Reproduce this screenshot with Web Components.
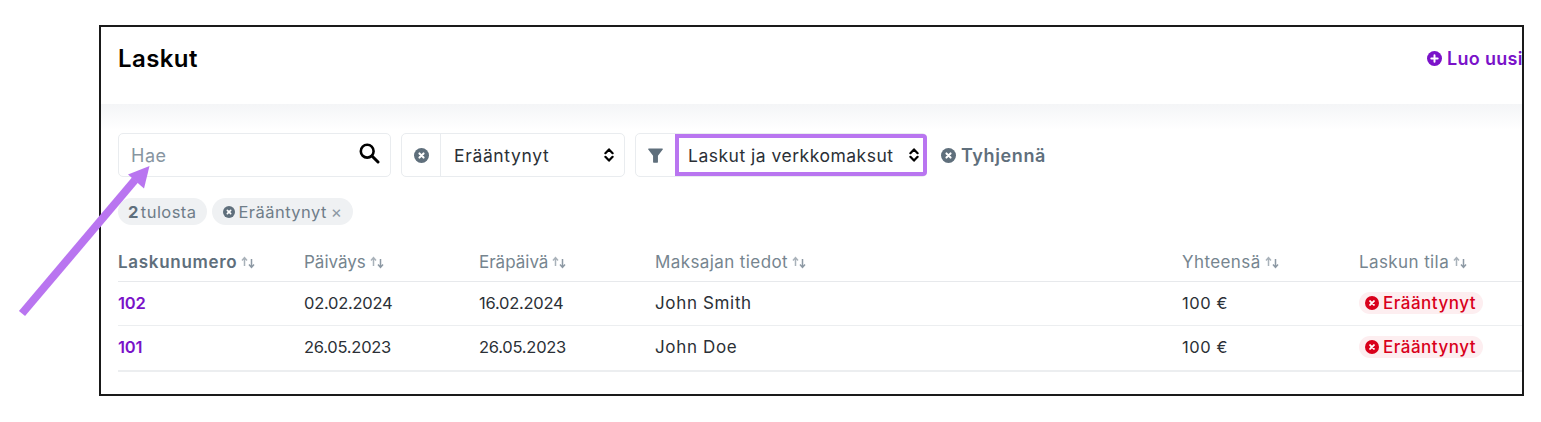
<!DOCTYPE html>
<html lang="fi">
<head>
<meta charset="utf-8">
<title>Laskut</title>
<style>
    html, body { margin: 0; padding: 0; background: #fff; overflow: hidden; }
    body { font-family: Inter, "Liberation Sans", sans-serif; color: #212529; }
</style>
</head>
<body>
<annotated-shot>
    <invoice-page>
        <page-header slot="header" heading="Laskut" action="Luo uusi"></page-header>
        <filter-bar slot="filters"></filter-bar>
        <result-chips slot="filters"></result-chips>
        <invoice-table slot="table">
            <invoice-row number="102" date="02.02.2024" due="16.02.2024" payer="John Smith" total="100 €"></invoice-row>
            <invoice-row number="101" date="26.05.2023" due="26.05.2023" payer="John Doe" total="100 €" last></invoice-row>
        </invoice-table>
    </invoice-page>
</annotated-shot>

<script>
const ICONS = {
    xCircle: '<circle cx="8" cy="8" r="8" fill="currentColor"/><path d="M5.8 5.8l4.4 4.4M10.2 5.8l-4.4 4.4" stroke="#fff" stroke-width="2.2" stroke-linecap="round"/>',
    plusCircle: '<circle cx="8" cy="8" r="8" fill="currentColor"/><path d="M8 4.6v6.8M4.6 8h6.8" stroke="#fff" stroke-width="2.1" stroke-linecap="round"/>',
    search: '<circle cx="8.2" cy="8.2" r="6.4" fill="none" stroke="currentColor" stroke-width="2.6"/><path d="M13 13l6 6" stroke="currentColor" stroke-width="3" stroke-linecap="round"/>',
    funnel: '<path d="M.8 .6h14.4c.6 0 .9.7.5 1.1L10.6 8.2V15c0 .4-.3.6-.6.6H6c-.3 0-.6-.2-.6-.6V8.2L.3 1.7C-.1 1.3.2 .6.8 .6z" fill="currentColor"/>',
    updown: '<path d="M1.4 6.2L5 2.4l3.6 3.8M1.4 9.8L5 13.6l3.6-3.8" fill="none" stroke="currentColor" stroke-width="2.2" stroke-linecap="round" stroke-linejoin="round"/>',
    sort: '<path d="M3.5 10V2M1 4.4L3.5 1.6 6 4.4" fill="none" stroke="#a9b2ba" stroke-width="1.5"/><path d="M10.5 3v8.2M8 8.6l2.5 2.8L13 8.6" fill="none" stroke="#8d99a4" stroke-width="1.5"/>',
};

class UiIcon extends HTMLElement {
    connectedCallback() {
        const name = this.getAttribute('name');
        const box = { search: '0 0 21 21', updown: '0 0 10 16', sort: '0 0 14 13' }[name] || '0 0 16 16';
        this.attachShadow({ mode: 'open' }).innerHTML = `
            <style>
                :host { display: inline-flex; flex: none; width: var(--w, 15px); height: var(--h, 15px); }
                svg { width: 100%; height: 100%; display: block; }
            </style>
            <svg viewBox="${box}">${ICONS[name]}</svg>
        `;
    }
}

class AnnotatedShot extends HTMLElement {
    constructor() {
        super();
        this.attachShadow({ mode: 'open' }).innerHTML = `
            <style>
                :host { display: block; position: relative; width: 1541px; height: 422px; padding: 25px 17px 0 99px; box-sizing: border-box; }
                svg { position: absolute; left: 0; top: 0; pointer-events: none; }
            </style>
            <slot></slot>
            <svg width="1541" height="422">
                <path d="M22 313.5L135 180" stroke="#b975f0" stroke-width="8"/>
                <path d="M149.5 166L128 174.5L144 188.5Z" fill="#b975f0"/>
            </svg>
        `;
    }
}

class InvoicePage extends HTMLElement {
    constructor() {
        super();
        this.attachShadow({ mode: 'open' }).innerHTML = `
            <style>
                :host { display: block; height: 371px; box-sizing: border-box; border: 2px solid #1a1a1a; overflow: hidden; background: #fff; }
                .filters { padding: 29px 0 0 17px; background: linear-gradient(#f4f5f7, #fff 26px); }
                .table { padding: 16px 0 0 17px; }
            </style>
            <slot name="header"></slot>
            <div class="filters"><slot name="filters"></slot></div>
            <div class="table"><slot name="table"></slot></div>
        `;
    }
}

class PageHeader extends HTMLElement {
    connectedCallback() {
        this.attachShadow({ mode: 'open' }).innerHTML = `
            <style>
                :host { display: flex; justify-content: space-between; align-items: center; height: 77px; padding: 0 0 15px 17px; box-sizing: border-box; white-space: nowrap; }
                h1 { margin: 0; font-size: 24px; font-weight: 600; color: #000; letter-spacing: 0.4px; }
                a { display: flex; align-items: center; gap: 5px; width: 95px; color: #7a12c9; font-size: 18px; font-weight: 600; letter-spacing: 0.3px; }
                ui-icon { --w: 15px; --h: 15px; }
            </style>
            <h1>${this.getAttribute('heading')}</h1>
            <a><ui-icon name="plusCircle"></ui-icon>${this.getAttribute('action')}</a>
        `;
    }
}

class SearchBox extends HTMLElement {
    constructor() {
        super();
        this.attachShadow({ mode: 'open' }).innerHTML = `
            <style>
                :host { display: flex; align-items: center; justify-content: space-between; width: 273px; height: 44px; box-sizing: border-box; padding: 0 10px 0 12px; border: 1px solid #e9ecef; border-radius: 5px; background: #fff; }
                span { color: #8795a1; font-size: 18px; letter-spacing: 0.5px; }
                ui-icon { --w: 21px; --h: 21px; color: #000; margin-bottom: 3px; }
            </style>
            <span>Hae</span>
            <ui-icon name="search"></ui-icon>
        `;
    }
}

class SelectGroup extends HTMLElement {
    connectedCallback() {
        const focused = this.hasAttribute('focused');
        this.attachShadow({ mode: 'open' }).innerHTML = `
            <style>
                :host { display: flex; height: 44px; box-sizing: border-box; border: 1px solid #e9ecef; border-radius: 5px; background: #fff; width: ${this.getAttribute('width')}px; }
                .addon { width: ${focused ? 39 : 38}px; flex: none; display: flex; align-items: center; justify-content: center; color: #5f6f7c; border-right: ${focused ? 0 : 1}px solid #e9ecef; }
                .select { flex: 1; display: flex; align-items: center; justify-content: space-between; min-width: 0; box-sizing: border-box; padding: 0 10px 0 13px; font-size: 17.5px; letter-spacing: 0.65px; color: #2b3036; white-space: nowrap; }
                .focused { margin: 0 -1px 0 0; padding: 0 4px 0 9px; border: 4px solid #b975f0; border-radius: 0 4px 4px 0; letter-spacing: 0.5px; }
                .chev { --w: 10px; --h: 16px; color: #000; }
            </style>
            <div class="addon"><ui-icon name="${this.getAttribute('icon')}"></ui-icon></div>
            <div class="select ${focused ? 'focused' : ''}">${this.getAttribute('value')}<ui-icon class="chev" name="updown"></ui-icon></div>
        `;
    }
}

class FilterBar extends HTMLElement {
    constructor() {
        super();
        this.attachShadow({ mode: 'open' }).innerHTML = `
            <style>
                :host { display: flex; align-items: center; gap: 10px; }
                a { display: flex; align-items: center; gap: 5px; margin-left: 4px; color: #5f6f7c; font-size: 18px; font-weight: 600; letter-spacing: 0.6px; }
            </style>
            <search-box></search-box>
            <select-group icon="xCircle" value="Erääntynyt" width="224"></select-group>
            <select-group icon="funnel" value="Laskut ja verkkomaksut" width="292" focused></select-group>
            <a><ui-icon name="xCircle"></ui-icon>Tyhjennä</a>
        `;
    }
}

class ResultChips extends HTMLElement {
    constructor() {
        super();
        this.attachShadow({ mode: 'open' }).innerHTML = `
            <style>
                :host { display: flex; gap: 5px; margin-top: 21px; }
                div { display: flex; align-items: center; height: 27px; padding: 0 10px; border-radius: 14px; background: #eff1f3; color: #6f7d89; font-size: 16.5px; letter-spacing: 0.45px; white-space: nowrap; }
                b { color: #5f6f7c; font-weight: 700; margin-right: 2px; }
                ui-icon { --w: 12px; --h: 12px; color: #5f6f7c; margin: 0 4px 0 1px; }
                i { font-style: normal; font-size: 17px; color: #8d99a4; margin-left: 4px; }
            </style>
            <div><b>2</b>tulosta</div>
            <div><ui-icon name="xCircle"></ui-icon>Erääntynyt<i>×</i></div>
        `;
    }
}

class SortHead extends HTMLElement {
    constructor() {
        super();
        this.attachShadow({ mode: 'open' }).innerHTML = `
            <style>
                :host { display: inline-flex; align-items: center; gap: 4px; }
                ui-icon { --w: 14px; --h: 13px; }
            </style>
            <slot></slot><ui-icon name="sort"></ui-icon>
        `;
    }
}

const COLUMNS = '186px 175px 176px 527px 177px 1fr';

class InvoiceTable extends HTMLElement {
    constructor() {
        super();
        this.attachShadow({ mode: 'open' }).innerHTML = `
            <style>
                :host { display: block; }
                .head { display: grid; grid-template-columns: ${COLUMNS}; align-items: center; height: 41px; padding-top: 2px; box-sizing: border-box; border-bottom: 1px solid #e7e9ec; color: #76858f; font-size: 17px; letter-spacing: 0.4px; white-space: nowrap; }
                .first { font-weight: 600; color: #5f6f7c; letter-spacing: 0.7px; }
                .tight { letter-spacing: 0; }
            </style>
            <div class="head">
                <sort-head class="first">Laskunumero</sort-head>
                <sort-head class="tight">Päiväys</sort-head>
                <sort-head class="tight">Eräpäivä</sort-head>
                <sort-head>Maksajan tiedot</sort-head>
                <sort-head>Yhteensä</sort-head>
                <sort-head>Laskun tila</sort-head>
            </div>
            <slot></slot>
        `;
    }
}

class InvoiceRow extends HTMLElement {
    connectedCallback() {
        const get = (name) => this.getAttribute(name);
        this.attachShadow({ mode: 'open' }).innerHTML = `
            <style>
                :host { display: grid; grid-template-columns: ${COLUMNS}; align-items: center; height: 44px; padding-bottom: 1px; box-sizing: border-box; border-bottom: 1px solid #eceef0; color: #2b3036; font-size: 16.5px; white-space: nowrap; }
                :host([last]) { height: 46px; border-bottom-width: 2px; padding-bottom: 2px; }
                a { color: #7a12c9; font-weight: 600; letter-spacing: -0.2px; }
                .date { letter-spacing: -0.25px; }
                .payer { font-size: 17px; letter-spacing: 0.65px; }
                .total { letter-spacing: 0.6px; }
            </style>
            <a>${get('number')}</a>
            <span class="date">${get('date')}</span>
            <span class="date">${get('due')}</span>
            <span class="payer">${get('payer')}</span>
            <span class="total">${get('total')}</span>
            <status-badge>Erääntynyt</status-badge>
        `;
    }
}

class StatusBadge extends HTMLElement {
    constructor() {
        super();
        this.attachShadow({ mode: 'open' }).innerHTML = `
            <style>
                :host { display: inline-flex; justify-self: start; align-items: center; gap: 4px; height: 22px; padding: 0 7px 0 6px; border-radius: 11px; background: #fdeef0; color: #d9001b; font-size: 17px; font-weight: 500; letter-spacing: 0.5px; }
                ui-icon { --w: 14px; --h: 14px; }
            </style>
            <ui-icon name="xCircle"></ui-icon><slot></slot>
        `;
    }
}

customElements.define('ui-icon', UiIcon);
customElements.define('annotated-shot', AnnotatedShot);
customElements.define('invoice-page', InvoicePage);
customElements.define('page-header', PageHeader);
customElements.define('search-box', SearchBox);
customElements.define('select-group', SelectGroup);
customElements.define('filter-bar', FilterBar);
customElements.define('result-chips', ResultChips);
customElements.define('sort-head', SortHead);
customElements.define('invoice-table', InvoiceTable);
customElements.define('invoice-row', InvoiceRow);
customElements.define('status-badge', StatusBadge);
</script>
</body>
</html>
